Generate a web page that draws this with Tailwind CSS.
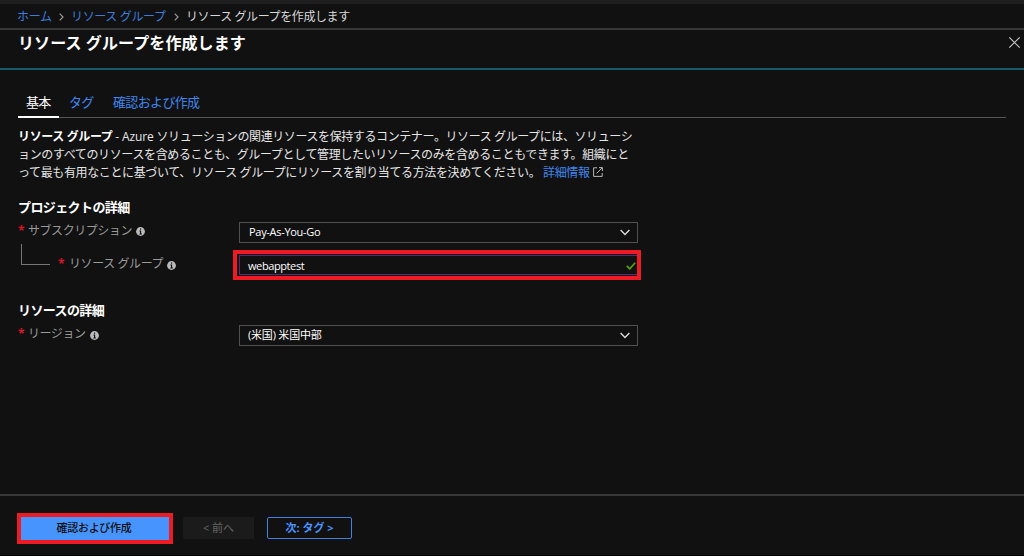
<!DOCTYPE html>
<html lang="ja">
<head>
    <meta charset="UTF-8">
    <meta name="viewport" content="width=device-width, initial-scale=1.0">
    <title>リソース グループを作成します</title>
    <script src="https://cdn.jsdelivr.net/npm/@tailwindcss/browser@4"></script>
    <style>
        body {
            font-family: 'Open Sans', 'Noto Sans CJK JP', sans-serif;
        }
    </style>
</head>
<body class="bg-[#111111] text-white w-[1024px] h-[556px] overflow-hidden flex flex-col whitespace-nowrap">
    <div class="h-[4px] bg-[#1e1e1e] shrink-0"></div>

    <!-- Breadcrumb -->
    <nav class="h-[26px] shrink-0 border-b-2 border-[#383838] flex items-center pl-[17px] pt-[1px] text-[12px] leading-[24px]">
        <a href="#" class="text-[#3b7ddd] w-[42px] tracking-[-0.3px]">ホーム</a>
        <svg class="w-[5px] h-[8px] mr-[7px] mt-[1px]" viewBox="0 0 5 8" fill="none" stroke="#999" stroke-width="1.2"><path d="M.7.7 4 4 .7 7.3"/></svg>
        <a href="#" class="text-[#3b7ddd] w-[103px] tracking-[-0.35px]">リソース グループ</a>
        <svg class="w-[5px] h-[8px] mr-[7px] mt-[1px]" viewBox="0 0 5 8" fill="none" stroke="#999" stroke-width="1.2"><path d="M.7.7 4 4 .7 7.3"/></svg>
        <span class="text-[#d8d8d8] tracking-[-0.4px]">リソース グループを作成します</span>
    </nav>

    <!-- Title -->
    <header class="h-[40px] shrink-0 border-b-2 border-[#175a6a] flex justify-between pl-[18px] pr-[3px]">
        <h1 class="text-[16px] leading-[26px] font-bold tracking-[0.1px]">リソース グループを作成します</h1>
        <svg class="w-[13px] h-[13px] mt-[6px]" viewBox="0 0 13 13" fill="none" stroke="#c4c4c4" stroke-width="1.2"><path d="M1.3 1.3l10.4 10.4M11.7 1.3 1.3 11.7"/></svg>
    </header>

    <main class="grow pl-[18px] pr-[18px] pt-[22px]">
        <!-- Tabs -->
        <div class="h-[26px] border-b border-[#555] flex text-[13px] leading-[20px] tracking-[-0.65px]">
            <span class="h-[26px] w-[41px] pl-[8px] border-b-2 border-white">基本</span>
            <a href="#" class="text-[#3f86ee] ml-[10px] w-[44px]">タグ</a>
            <a href="#" class="text-[#3f86ee]">確認および作成</a>
        </div>

        <p class="mt-[10px] text-[12px] leading-[18px] tracking-[-0.37px] text-[#e6e6e6]"><b class="text-white">リソース グループ</b> <span class="tracking-[-0.1px]">- Azure</span> <span class="tracking-[-0.4px]">ソリューションの関連リソースを保持するコンテナー。リソース グループには、ソリューシ</span><br>ョンのすべてのリソースを含めることも、グループとして管理したいリソースのみを含めることもできます。組織にと<br>って最も有用なことに基づいて、リソース グループにリソースを割り当てる方法を決めてください。 <a href="#" class="text-[#3f86ee]">詳細情報</a><svg class="inline-block align-[0px] ml-[3px] w-[10px] h-[10px]" viewBox="0 0 10 10" fill="none" stroke="#b8b8b8" stroke-width="1"><path d="M4 .8H.6v8.6h8.6V6M6 .6h3.4V4M9.2.8 3.6 6.4"/></svg></p>

        <!-- Project details -->
        <h2 class="mt-[16px] text-[13px] leading-[18px] font-bold tracking-[-0.6px]">プロジェクトの詳細</h2>
        <div class="flex mt-[6px] h-[22px]">
            <div class="w-[221px] flex text-[12px] leading-[20px] tracking-[-0.45px] text-[#9a9a9a] -mt-[1px] h-[20px]">
                <span class="w-[10px] text-[#d81424] text-[12px] font-bold">*</span>サブスクリプション
                <svg class="w-[9px] h-[9px] ml-[4px] mt-[6px]" viewBox="0 0 9 9"><circle cx="4.5" cy="4.5" r="4.4" fill="#bbb"/><path d="M4.6 1.5v1.3M3.4 4h1.2v2.9M3.3 7h2.6" fill="none" stroke="#111" stroke-width="1.1"/></svg>
            </div>
            <div class="w-[399px] h-[21px] border border-[#505050] flex items-center justify-between pl-[9px] pr-[7px] text-[11px] tracking-[-0.3px]">
                Pay-As-You-Go
                <svg class="w-[10px] h-[7px]" viewBox="0 0 10 7" fill="none" stroke="#ddd" stroke-width="1.4"><path d="M.6 1 5 5.4 9.4 1"/></svg>
            </div>
        </div>
        <div class="flex h-[30px] mt-[6px]">
            <div class="w-[215px] flex text-[12px] leading-[20px] tracking-[-0.4px] text-[#9a9a9a]">
                <div class="ml-[3px] -mt-[6px] w-[29px] h-[21px] border-l border-b border-[#777]"></div>
                <span class="ml-[8px] w-[11px] mt-[4px] text-[#d81424] text-[12px] font-bold">*</span>
                <span class="mt-[4px]">リソース グループ</span>
                <svg class="w-[9px] h-[9px] ml-[4px] mt-[11px]" viewBox="0 0 9 9"><circle cx="4.5" cy="4.5" r="4.4" fill="#bbb"/><path d="M4.6 1.5v1.3M3.4 4h1.2v2.9M3.3 7h2.6" fill="none" stroke="#111" stroke-width="1.1"/></svg>
            </div>
            <div class="w-[408px] h-[30px] border-4 border-[#ed1c24] pt-[1px] pb-[1px] pl-[2px]">
                <div class="h-full border border-r-0 border-[#68217a] flex items-center justify-between pl-[8px] pr-[1px] pt-[2px] text-[11px] tracking-[-0.4px]">
                    webapptest
                    <svg class="w-[10px] h-[8px]" viewBox="0 0 10 8" fill="none" stroke="#57a300" stroke-width="1.7"><path d="M.8 3.8 3.8 6.8 9.2.8"/></svg>
                </div>
            </div>
        </div>

        <!-- Resource details -->
        <h2 class="mt-[21px] text-[13px] leading-[18px] font-bold tracking-[-0.6px]">リソースの詳細</h2>
        <div class="flex mt-[6px]">
            <div class="w-[221px] flex text-[12px] leading-[20px] tracking-[-0.45px] text-[#9a9a9a] -mt-[1px] h-[20px]">
                <span class="w-[10px] text-[#d81424] text-[12px] font-bold">*</span>リージョン
                <svg class="w-[9px] h-[9px] ml-[4px] mt-[7px]" viewBox="0 0 9 9"><circle cx="4.5" cy="4.5" r="4.4" fill="#bbb"/><path d="M4.6 1.5v1.3M3.4 4h1.2v2.9M3.3 7h2.6" fill="none" stroke="#111" stroke-width="1.1"/></svg>
            </div>
            <div class="w-[399px] h-[21px] border border-[#505050] flex items-center justify-between pl-[8px] pr-[7px] text-[11px] tracking-[-0.2px]">
                (米国) 米国中部
                <svg class="w-[10px] h-[7px]" viewBox="0 0 10 7" fill="none" stroke="#ddd" stroke-width="1.4"><path d="M.6 1 5 5.4 9.4 1"/></svg>
            </div>
        </div>
    </main>

    <!-- Footer buttons -->
    <footer class="h-[62px] shrink-0 border-t-2 border-[#383838] border-b border-b-black flex pl-[17px] pt-[17px] text-[11px] tracking-[-0.3px]">
        <button class="w-[156px] h-[31px] border-4 border-[#ed1c24] bg-[#4894fe] text-[#111] font-medium pr-[2px]">確認および作成</button>
        <button class="w-[71px] h-[22px] mt-[4px] ml-[10px] rounded-[1px] bg-[#1b1b1b] text-[#666] tracking-[0px]">&lt; 前へ</button>
        <button class="w-[85px] h-[22px] mt-[4px] ml-[13px] rounded-[2px] border border-[#3f80e0] text-[#4894fe] font-bold tracking-[0px]">次: タグ &gt;</button>
    </footer>
</body>
</html>
